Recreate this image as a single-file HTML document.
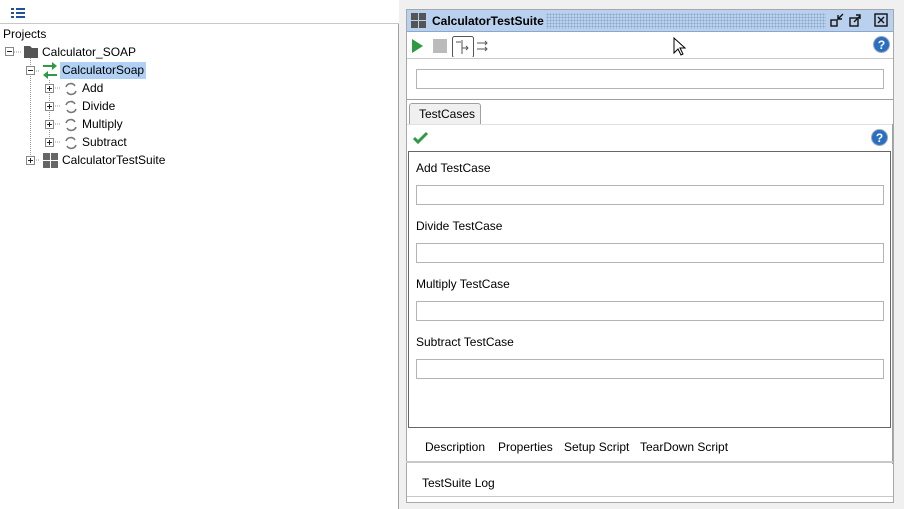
<!DOCTYPE html>
<html><head><style>
*{margin:0;padding:0;box-sizing:border-box}
body{width:904px;height:509px;background:#f0f0f0;font-family:"Liberation Sans",sans-serif;font-size:12px;color:#000;position:relative;overflow:hidden}
.a{position:absolute}
.t{position:absolute;white-space:nowrap;font-size:12px}
.inp{position:absolute;background:#fff;border:1px solid #b4b4b4;height:20px}
</style></head><body>
<!-- left panel -->
<div class="a" style="left:0;top:0;width:399px;height:509px;background:#fff;border-right:1px solid #a0a0a0"></div>
<div class="a" style="left:0;top:0;width:399px;height:24px;background:#fff;border-bottom:1px solid #c8c8c8"></div>
<svg class="a" style="left:11px;top:8px" width="16" height="12"><g fill="#2050a0"><rect x="0" y="0" width="3" height="2"/><rect x="5" y="0" width="9" height="2"/><rect x="0" y="4" width="3" height="2"/><rect x="5" y="4" width="9" height="2"/><rect x="0" y="8" width="3" height="2"/><rect x="5" y="8" width="9" height="2"/></g></svg>
<div class="t" style="left:3px;top:27px">Projects</div>
<svg class="a" style="left:0;top:40px" width="200" height="130">
<g stroke="#999" stroke-dasharray="1,1" fill="none">
<path d="M9.5 16V6M14 12H22M30.5 18V120M34 31H40M49.5 40V102M53 48H60M53 66H60M53 84H60M53 102H60M34 120H40"/>
</g>
<g fill="#fff" stroke="#888"><rect x="5.5" y="7.5" width="8" height="8"/><rect x="26.5" y="26.5" width="8" height="8"/><rect x="45.5" y="44.5" width="8" height="8"/><rect x="45.5" y="62.5" width="8" height="8"/><rect x="45.5" y="80.5" width="8" height="8"/><rect x="45.5" y="98.5" width="8" height="8"/><rect x="26.5" y="116.5" width="8" height="8"/></g>
<g stroke="#222"><path d="M7 11.5h5M28 30.5h5M47 48.5h5M49.5 46v5M47 66.5h5M49.5 64v5M47 84.5h5M49.5 82v5M47 102.5h5M49.5 100v5M28 120.5h5M30.5 118v5"/></g>
<path d="M24 6h6l2 2h6v10H24z" fill="#555"/>
<g fill="#2e9a44"><path d="M43 25h9v-3l5 4-5 4v-3h-9z"/><path d="M57 34h-9v-3l-5 4 5 4v-3h9z"/></g>
<g stroke="#777" stroke-width="1.6" fill="none"><path d="M66 47a5 5 0 0 1 9-1M76 51a5 5 0 0 1-9 1M66 65a5 5 0 0 1 9-1M76 69a5 5 0 0 1-9 1M66 83a5 5 0 0 1 9-1M76 87a5 5 0 0 1-9 1M66 101a5 5 0 0 1 9-1M76 105a5 5 0 0 1-9 1"/></g>
<g fill="#666"><rect x="43" y="113" width="7" height="7"/><rect x="51" y="113" width="7" height="7"/><rect x="43" y="121" width="7" height="7"/><rect x="51" y="121" width="7" height="7"/></g>
</svg>
<div class="t" style="left:42px;top:45px">Calculator_SOAP</div>
<div class="a" style="left:60px;top:62px;width:86px;height:17px;background:#b0d0f4"></div>
<div class="t" style="left:62px;top:63px">CalculatorSoap</div>
<div class="t" style="left:82px;top:81px">Add</div>
<div class="t" style="left:82px;top:99px">Divide</div>
<div class="t" style="left:82px;top:117px">Multiply</div>
<div class="t" style="left:82px;top:135px">Subtract</div>
<div class="t" style="left:62px;top:153px">CalculatorTestSuite</div>
<!-- right panel -->
<div class="a" style="left:406px;top:9px;width:488px;height:494px;background:#fff;border:1px solid #a8a8a8"></div>
<div class="a" style="left:407px;top:10px;width:486px;height:22px;background:#b9d1ee;border-bottom:1px solid #8aa8cc"></div>
<div class="a" style="left:546px;top:13px;width:280px;height:16px;background-image:radial-gradient(#8aa6c8 0.8px,transparent 0.9px);background-size:3px 3px"></div>
<svg class="a" style="left:411px;top:13px" width="16" height="16"><g fill="#555"><rect x="0" y="0" width="7" height="7"/><rect x="8" y="0" width="7" height="7"/><rect x="0" y="8" width="7" height="7"/><rect x="8" y="8" width="7" height="7"/></g></svg>
<div class="t" style="left:432px;top:14px;font-weight:bold">CalculatorTestSuite</div>
<svg class="a" style="left:830px;top:12px" width="60" height="18"><g stroke="#111" stroke-width="1.4" fill="none"><rect x="1" y="8" width="6" height="6"/><path d="M8 7l5-5M8 3v4h4"/><rect x="20" y="6" width="8" height="8"/><path d="M24 10l6-6M26 3h4v4"/><rect x="45" y="2" width="12" height="12"/><path d="M48 5l6 6M54 5l-6 6"/></g></svg>
<!-- toolbar -->
<svg class="a" style="left:410px;top:35px" width="85" height="22"><path d="M2 4l11 7-11 7z" fill="#2e9a44"/><rect x="23" y="4" width="14" height="14" fill="#bbb"/><rect x="42.5" y="1.5" width="21" height="21" rx="2" fill="#fff" stroke="#555"/><g stroke="#555" fill="none"><path d="M46 7h5M52 5v14M52 13h6M56 11l2 2-2 2"/><path d="M67 8h10M75 6l2 2-2 2M67 14h10M75 12l2 2-2 2"/></g></svg>
<svg class="a" style="left:873px;top:36px" width="17" height="17"><circle cx="8.5" cy="8.5" r="8" fill="#2a6ec0" stroke="#9ab"/><text x="8.5" y="13" font-size="12" font-weight="bold" fill="#fff" text-anchor="middle" font-family="Liberation Sans">?</text></svg>
<div class="a" style="left:407px;top:58px;width:486px;height:1px;background:#c8c8c8"></div>
<div class="inp" style="left:416px;top:69px;width:468px"></div>
<div class="a" style="left:407px;top:99px;width:486px;height:1px;background:#a0a0a0"></div>
<div class="a" style="left:409px;top:103px;width:72px;height:22px;background:#f0f0f0;border:1px solid #a0a0a0;border-bottom:none;border-radius:3px 3px 0 0"></div>
<div class="t" style="left:419px;top:107px">TestCases</div>
<div class="a" style="left:407px;top:124px;width:486px;height:1px;background:#e0e0e0"></div>
<div class="a" style="left:892px;top:124px;width:1px;height:340px;background:#a0a0a0"></div>
<svg class="a" style="left:413px;top:131px" width="16" height="13"><path d="M1 7l4 4 9-9" stroke="#2e9a44" stroke-width="3" fill="none"/></svg>
<svg class="a" style="left:871px;top:129px" width="17" height="17"><circle cx="8.5" cy="8.5" r="8" fill="#2a6ec0" stroke="#9ab"/><text x="8.5" y="13" font-size="12" font-weight="bold" fill="#fff" text-anchor="middle" font-family="Liberation Sans">?</text></svg>
<div class="a" style="left:408px;top:151px;width:483px;height:277px;border:1px solid #666;background:#fff"></div>
<div class="t" style="left:416px;top:161px">Add TestCase</div>
<div class="inp" style="left:416px;top:185px;width:468px"></div>
<div class="t" style="left:416px;top:219px">Divide TestCase</div>
<div class="inp" style="left:416px;top:243px;width:468px"></div>
<div class="t" style="left:416px;top:277px">Multiply TestCase</div>
<div class="inp" style="left:416px;top:301px;width:468px"></div>
<div class="t" style="left:416px;top:335px">Subtract TestCase</div>
<div class="inp" style="left:416px;top:359px;width:468px"></div>
<div class="t" style="left:425px;top:440px">Description</div>
<div class="t" style="left:498px;top:440px">Properties</div>
<div class="t" style="left:564px;top:440px">Setup Script</div>
<div class="t" style="left:640px;top:440px">TearDown Script</div>
<div class="a" style="left:406px;top:461px;width:487px;height:2px;background:#c8c8c8"></div>
<div class="t" style="left:422px;top:476px">TestSuite Log</div>
<div class="a" style="left:407px;top:496px;width:486px;height:1px;background:#c8c8c8"></div>
<svg class="a" style="left:673px;top:37px" width="14" height="20"><path d="M1 1v15l4-4 3 6 2-1-3-6h5z" fill="#fff" stroke="#000"/></svg>
</body></html>
